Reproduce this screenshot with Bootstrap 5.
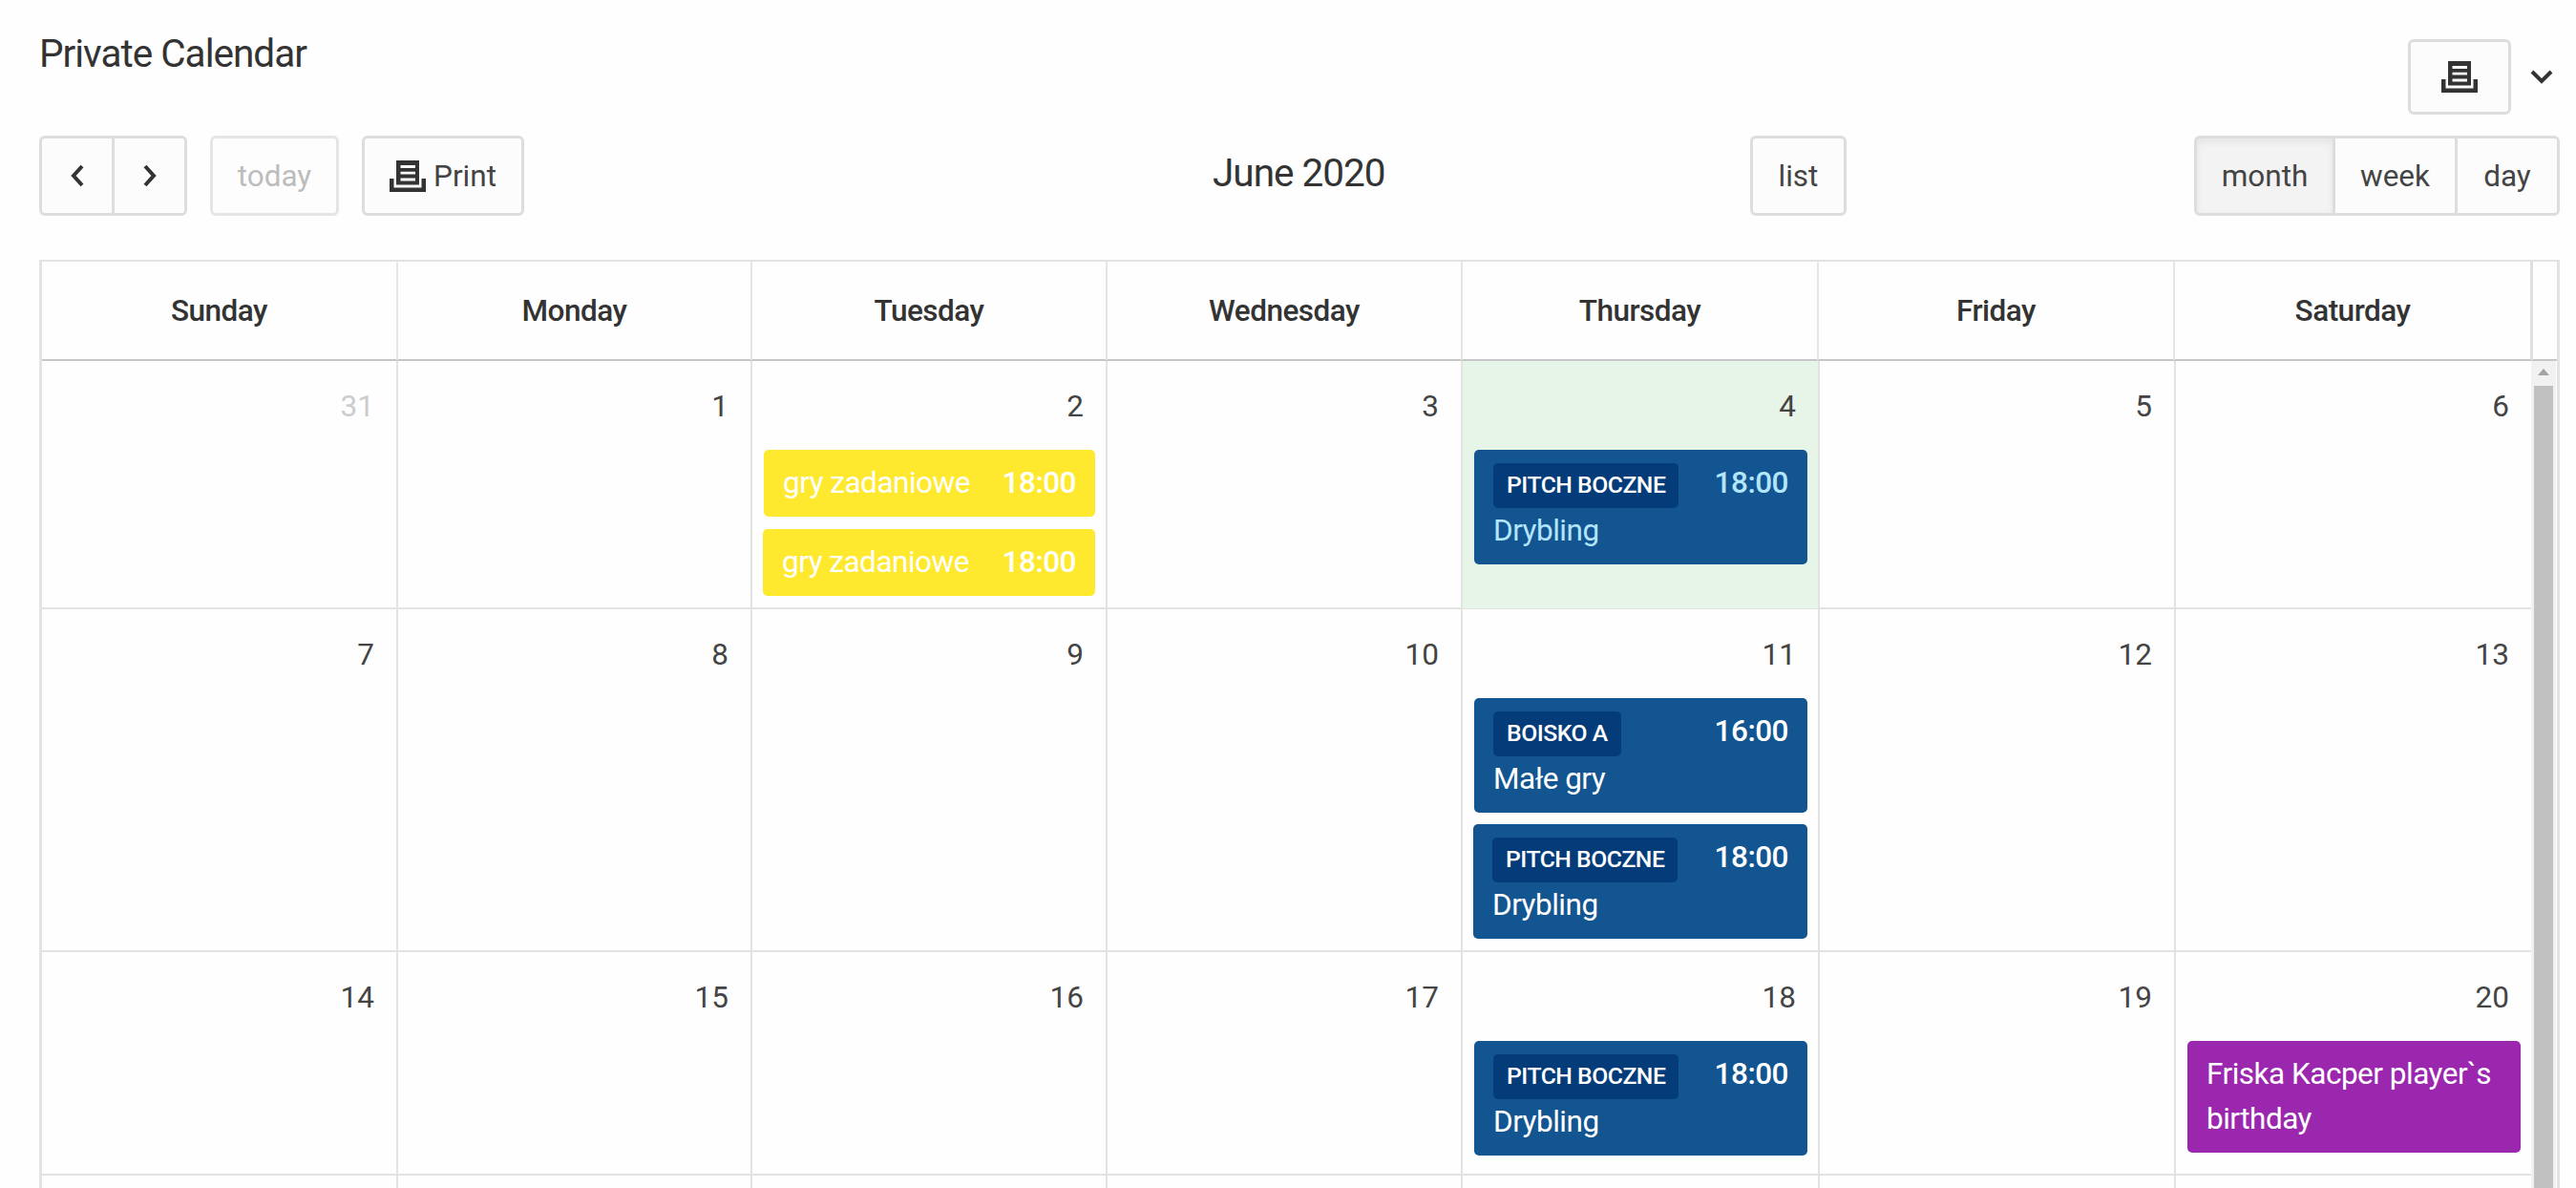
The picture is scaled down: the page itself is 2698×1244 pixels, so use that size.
<!DOCTYPE html>
<html lang="en">
  <head>
    <meta charset="UTF-8" />
    <meta name="viewport" content="width=device-width, initial-scale=1.0" />
    <title>Private Calendar</title>
    <link href="https://cdn.jsdelivr.net/npm/bootstrap@5.3.0/dist/css/bootstrap.min.css" rel="stylesheet" />
    <style>
      body {
        font-family: Roboto, "Liberation Sans", sans-serif;
        font-size: 31.5px;
        line-height: 47px;
        letter-spacing: -.5px;
        color: #333;
        height: 1244px;
        overflow: hidden;
        background: #fefefe;
      }
      .page-head {
        height: 142px;
        padding: 41px 20px 0 41px;
      }
      .page-title, .month-title {
        font-size: 40.5px;
        font-weight: 400;
        line-height: 48px;
        letter-spacing: -1px;
        white-space: nowrap;
        margin: 0;
      }
      .page-title { margin-top: -9px; }
      .month-title { padding-top: 15px; }
      .btn-cal {
        --bs-btn-font-size: 31.5px;
        --bs-btn-line-height: 47px;
        --bs-btn-color: #444;
        --bs-btn-bg: #fcfcfc;
        --bs-btn-border-color: #ddd;
        --bs-btn-border-width: 3px;
        --bs-btn-border-radius: 6px;
        --bs-btn-padding-x: 0;
        --bs-btn-padding-y: 0;
        --bs-btn-active-bg: #f3f3f3;
        --bs-btn-active-color: #444;
        --bs-btn-active-border-color: #ddd;
        --bs-btn-disabled-color: #444;
        --bs-btn-disabled-bg: #fafcfb;
        --bs-btn-disabled-border-color: #b8b8b8;
        --bs-btn-disabled-opacity: .35;
        display: flex;
        align-items: center;
        justify-content: center;
        height: 84px;
      }
      .btn-cal svg { display: block; }
      .btn-group > .btn-cal + .btn-cal { margin-left: -3px !important; }
      .btn-cal.active { box-shadow: inset 0 4px 9px rgba(0, 0, 0, .06); }
      .w-arrow { width: 79px; }
      .w-today { width: 135px; }
      .w-print { width: 170px; }
      .w-list { width: 101px; }
      .w-month { width: 148px; }
      .w-week { width: 131px; }
      .w-day { width: 110px; }
      .btn-top { width: 108px; height: 79px; }
      .toolbar {
        display: grid;
        grid-template-columns: 1229px 180px 383px 101px 1fr auto;
        padding: 0 17px 0 41px;
        height: 130px;
      }
      .calendar {
        margin: 0 17px 0 41px;
        border: 3px solid #e3e3e3;
        border-top-width: 2px;
        border-bottom: 0;
        height: 972px;
        overflow: hidden;
      }
      .head-row {
        display: grid;
        grid-template-columns: 371px 371px 372px 372px 373px 373px 374px 1fr;
        height: 104px;
        border-bottom: 2px solid #c6c6c6;
        line-height: 103px;
        text-align: center;
        font-weight: 500;
      }
      .head-row > div + div { border-left: 2px solid #e5e5e5; }
      .head-row > div:last-child { border-left: 3px solid #dfdfdf; }
      .week-row {
        display: grid;
        grid-template-columns: 371px 371px 372px 372px 374px 373px 374px;
        border-bottom: 2px solid #e3e3e3;
      }
      .week-1 { height: 260px; }
      .week-2 { height: 359px; }
      .week-3 { height: 234px; }
      .day + .day { border-left: 2px solid #e3e3e3; }
      .day { padding: 0 11px 0 12px; }
      .today { background: #e7f4e8; }
      .day-num {
        height: 93px;
        padding: 24px 12px 0 0;
        text-align: right;
        letter-spacing: 0;
        color: #444;
      }
      .other-month { color: #ccc; }
      .event {
        border-radius: 5px;
        padding: 11px 20px;
        margin-bottom: 12px;
        color: #fff;
        background: #125591;
        height: 120px;
      }
      .event + .event { margin-left: -1px; }
      .event-yellow { background: #ffe92f; height: 70px; margin-bottom: 13px; }
      .event-purple { background: #9b27af; height: 117px; }
      .event-time { float: right; font-weight: 500; }
      .event-place {
        display: inline-block;
        height: 47px;
        margin-top: 3px;
        padding: 0 14px;
        border-radius: 5px;
        background: #043c7a;
        color: #fff;
        font-size: 24.75px;
        font-weight: 500;
        line-height: 46px;
        vertical-align: top;
      }
      .event-past { color: #b3e5fc; }
      .scroll-track { width: 26px; background: #f1f1f1; }
      .scroll-thumb { width: 20px; height: 900px; margin: 11px 3px 0; background: #c1c1c1; }
    </style>
  </head>
  <body>
    <div class="page-head d-flex justify-content-between align-items-start">
      <h1 class="page-title">Private Calendar</h1>
      <div class="d-flex align-items-center">
        <button class="btn btn-cal btn-top" aria-label="Print">
          <svg width="38" height="33" viewBox="0 0 38 33"><path fill="#333" fill-rule="evenodd" d="M7 0h24v25.500H7zM11.500 5v3h15.500V5zM11.500 11.700v2.800h15.500v-2.800zM11.500 18.500v3h15.500v-3zM0 19h4.500v9.500h29V19H38v14H0z" /></svg>
        </button>
        <svg class="ms-3" width="32" height="24" viewBox="0 0 32 24"><path d="M6 6l10 10 10-10" fill="none" stroke="#333" stroke-width="4" /></svg>
      </div>
    </div>

    <div class="toolbar">
      <div class="d-flex">
        <div class="btn-group align-self-start me-4">
          <button class="btn btn-cal w-arrow" aria-label="Previous">
            <svg width="16" height="24" viewBox="0 0 16 24"><path d="M13 2L4 12l9 10" fill="none" stroke="#333" stroke-width="4" /></svg>
          </button>
          <button class="btn btn-cal w-arrow" aria-label="Next">
            <svg width="16" height="24" viewBox="0 0 16 24"><path d="M3 2l9 10-9 10" fill="none" stroke="#333" stroke-width="4" /></svg>
          </button>
        </div>
        <button class="btn btn-cal w-today me-4" disabled>today</button>
        <button class="btn btn-cal w-print">
          <svg class="me-2" width="38" height="33" viewBox="0 0 38 33"><path fill="#333" fill-rule="evenodd" d="M7 0h24v25.500H7zM11.500 5v3h15.500V5zM11.500 11.700v2.800h15.500v-2.800zM11.500 18.500v3h15.500v-3zM0 19h4.500v9.500h29V19H38v14H0z" /></svg>Print
        </button>
      </div>
      <h2 class="month-title">June 2020</h2>
      <span></span>
      <button class="btn btn-cal w-list">list</button>
      <span></span>
      <div class="btn-group align-self-start">
        <button class="btn btn-cal w-month active">month</button>
        <button class="btn btn-cal w-week">week</button>
        <button class="btn btn-cal w-day">day</button>
      </div>
    </div>

    <div class="calendar">
      <div class="head-row">
        <div>Sunday</div>
        <div>Monday</div>
        <div>Tuesday</div>
        <div>Wednesday</div>
        <div>Thursday</div>
        <div>Friday</div>
        <div>Saturday</div>
        <div></div>
      </div>
      <div class="d-flex">
        <div class="weeks">
          <div class="week-row week-1">
            <div class="day"><div class="day-num other-month">31</div></div>
            <div class="day"><div class="day-num">1</div></div>
            <div class="day">
              <div class="day-num">2</div>
              <div class="event event-yellow"><span class="event-time">18:00</span>gry zadaniowe</div>
              <div class="event event-yellow"><span class="event-time">18:00</span>gry zadaniowe</div>
            </div>
            <div class="day"><div class="day-num">3</div></div>
            <div class="day today">
              <div class="day-num">4</div>
              <div class="event event-past">
                <span class="event-time">18:00</span><span class="event-place">PITCH BOCZNE</span>
                <div class="event-name">Drybling</div>
              </div>
            </div>
            <div class="day"><div class="day-num">5</div></div>
            <div class="day"><div class="day-num">6</div></div>
          </div>
          <div class="week-row week-2">
            <div class="day"><div class="day-num">7</div></div>
            <div class="day"><div class="day-num">8</div></div>
            <div class="day"><div class="day-num">9</div></div>
            <div class="day"><div class="day-num">10</div></div>
            <div class="day">
              <div class="day-num">11</div>
              <div class="event">
                <span class="event-time">16:00</span><span class="event-place">BOISKO A</span>
                <div class="event-name">Małe gry</div>
              </div>
              <div class="event">
                <span class="event-time">18:00</span><span class="event-place">PITCH BOCZNE</span>
                <div class="event-name">Drybling</div>
              </div>
            </div>
            <div class="day"><div class="day-num">12</div></div>
            <div class="day"><div class="day-num">13</div></div>
          </div>
          <div class="week-row week-3">
            <div class="day"><div class="day-num">14</div></div>
            <div class="day"><div class="day-num">15</div></div>
            <div class="day"><div class="day-num">16</div></div>
            <div class="day"><div class="day-num">17</div></div>
            <div class="day">
              <div class="day-num">18</div>
              <div class="event">
                <span class="event-time">18:00</span><span class="event-place">PITCH BOCZNE</span>
                <div class="event-name">Drybling</div>
              </div>
            </div>
            <div class="day"><div class="day-num">19</div></div>
            <div class="day">
              <div class="day-num">20</div>
              <div class="event event-purple">Friska Kacper player`s birthday</div>
            </div>
          </div>
          <div class="week-row week-3">
            <div class="day"></div>
            <div class="day"></div>
            <div class="day"></div>
            <div class="day"></div>
            <div class="day"></div>
            <div class="day"></div>
            <div class="day"></div>
          </div>
        </div>
        <div class="scroll-track">
          <svg class="d-block mx-auto mt-2" width="12" height="7" viewBox="0 0 12 7"><path d="M0 7l6-7 6 7z" fill="#a3a3a3" /></svg>
          <div class="scroll-thumb"></div>
        </div>
      </div>
    </div>

    <script src="https://cdn.jsdelivr.net/npm/bootstrap@5.3.0/dist/js/bootstrap.bundle.min.js"></script>
  </body>
</html>
